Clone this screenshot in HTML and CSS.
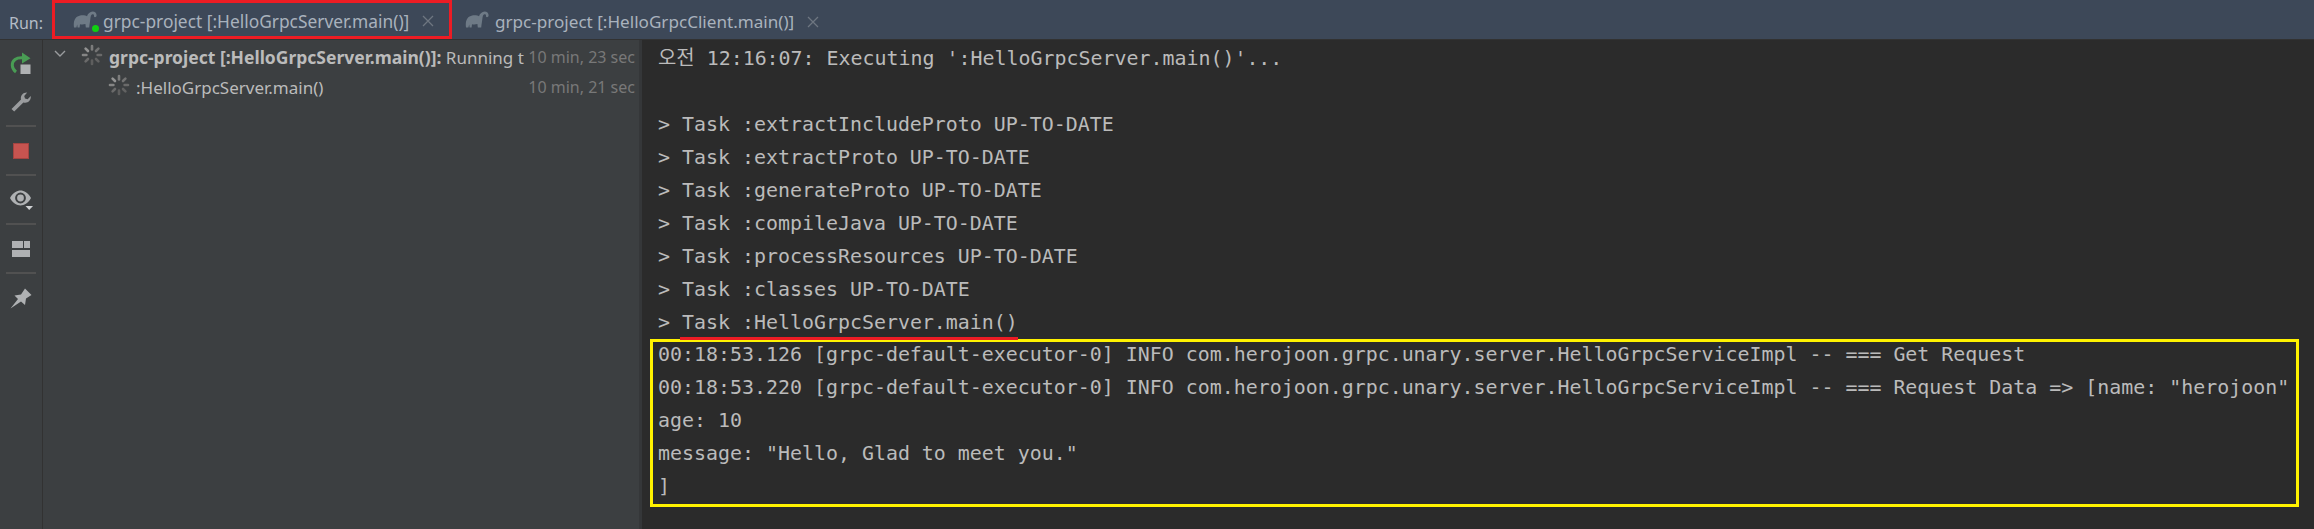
FILE: index.html
```html
<!DOCTYPE html>
<html lang="en">
<head>
<meta charset="utf-8">
<title>Run</title>
<link rel="stylesheet" href="styles.css">
</head>
<body>
<svg class="defs" width="0" height="0" aria-hidden="true">
  <defs>
    <symbol id="elephant" viewBox="0 0 24 17">
      <path d="M1 16.5 C0.4 12 1 7.5 4.5 5.5 C8 3.6 12 4 14 5.2 C15 2.8 17 0.6 19.6 0.6 C22 0.6 23.6 2.2 23.6 4.2 C23.6 5.4 22.9 6.2 22 6.2 C21.2 6.2 20.8 5.6 21 4.8 C21.2 3.6 20.3 3 19.4 3.2 C18 3.6 17.6 5.6 17.4 7.6 C17.2 10 16.6 12.6 16.2 16.5 L12.8 16.5 L12.4 13 C10.5 13.6 8.6 13.6 7 13.2 L6.6 16.5 L4.6 16.5 L4.2 13.4 L3.4 16.5 Z"/>
    </symbol>
    <symbol id="spinner" viewBox="0 0 22 22">
      <g stroke-width="2.6" stroke-linecap="round" fill="none">
        <path d="M11 2v3.4" stroke="#7c7c7c"/>
        <path d="M17.4 4.6l-2.4 2.4" stroke="#737373"/>
        <path d="M20 11h-3.4" stroke="#6a6a6a"/>
        <path d="M17.4 17.4l-2.4-2.4" stroke="#626262"/>
        <path d="M11 20v-3.4" stroke="#5e5e5e"/>
        <path d="M4.6 17.4l2.4-2.4" stroke="#6a6a6a"/>
        <path d="M2 11h3.4" stroke="#858585"/>
        <path d="M4.6 4.6l2.4 2.4" stroke="#939393"/>
      </g>
    </symbol>
    <symbol id="close" viewBox="0 0 12 12">
      <path d="M1 1l10 10M11 1L1 11" stroke="#6e7681" stroke-width="1.3" fill="none"/>
    </symbol>
  </defs>
</svg>

<div class="window">
  <header class="tabbar">
    <span class="run-label">Run:</span>
    <div class="tab tab-active">
      <span class="tab-icon">
        <svg class="elephant"><use href="#elephant"/></svg>
        <span class="live-dot"></span>
      </span>
      <span class="tab-title">grpc-project [:HelloGrpcServer.main()]</span>
      <svg class="tab-close"><use href="#close"/></svg>
    </div>
    <div class="tab tab-second">
      <span class="tab-icon">
        <svg class="elephant"><use href="#elephant"/></svg>
      </span>
      <span class="tab-title">grpc-project [:HelloGrpcClient.main()]</span>
      <svg class="tab-close"><use href="#close"/></svg>
    </div>
  </header>

  <div class="main">
    <aside class="toolbar">
      <div class="tool">
        <svg width="24" height="24" viewBox="0 0 24 24">
          <path d="M7 21 C2.5 17.5 2 11.5 6 8.5 C8 7 10.5 6.6 13.5 6.8" stroke="#499c54" stroke-width="3" fill="none"/>
          <path d="M13 1.5 L21.5 7.2 L13 12.5 Z" fill="#499c54"/>
          <rect x="11.5" y="13.5" width="10" height="9.5" fill="#afb1b3"/>
        </svg>
      </div>
      <div class="tool">
        <svg width="22" height="22" viewBox="0 0 22 22">
          <path d="M1.5 18 L11 8.6 C10.2 5 12.6 1.4 17.2 1.5 L14.2 5 L15 7.6 L17.6 8.2 L20.8 5 C21.2 9.8 17.4 12.6 13.4 11.4 L4.2 20.6 Z" fill="#9a9c9e"/>
        </svg>
      </div>
      <hr class="tool-sep">
      <div class="tool">
        <span class="stop-icon"></span>
      </div>
      <hr class="tool-sep">
      <div class="tool">
        <svg width="24" height="22" viewBox="0 0 24 22">
          <path d="M1 9 C4 3.5 8 1.6 11.5 1.6 C15 1.6 19 3.5 22 9 C19 14.5 15 16.4 11.5 16.4 C8 16.4 4 14.5 1 9 Z M11.5 3.6 A5.4 5.4 0 1 0 11.5 14.4 A5.4 5.4 0 1 0 11.5 3.6 Z" fill="#afb1b3" fill-rule="evenodd"/>
          <circle cx="11.5" cy="9" r="3.4" fill="#afb1b3"/>
          <path d="M16.5 17 L24 17 L20.2 21 Z" fill="#d0d2d4"/>
        </svg>
      </div>
      <hr class="tool-sep">
      <div class="tool">
        <svg width="18" height="16" viewBox="0 0 18 16">
          <path d="M0 0h11v7H0z M12 0h6v7h-6z M0 9h18v7H0z" fill="#afb1b3"/>
        </svg>
      </div>
      <hr class="tool-sep">
      <div class="tool">
        <svg width="22" height="22" viewBox="0 0 22 22">
          <path d="M0.5 21.5 L8 12 L4.5 8.5 L11 7.5 L15 1.5 L21.5 8 L16 11.5 L15 18 L11 14.5 Z" fill="#afb1b3"/>
        </svg>
      </div>
    </aside>

    <section class="tree">
      <div class="tree-row tree-root">
        <svg class="chevron" width="12" height="8" viewBox="0 0 12 8"><path d="M1 1l5 5 5-5" stroke="#9a9c9e" stroke-width="1.4" fill="none"/></svg>
        <svg class="spin"><use href="#spinner"/></svg>
        <span class="tree-label"><b>grpc-project [:HelloGrpcServer.main()]:</b> Running t</span>
        <span class="tree-time">10 min, 23 sec</span>
      </div>
      <div class="tree-row tree-child">
        <svg class="spin"><use href="#spinner"/></svg>
        <span class="tree-label">:HelloGrpcServer.main()</span>
        <span class="tree-time">10 min, 21 sec</span>
      </div>
    </section>

    <section class="console">
      <div class="line">오전 12:16:07: Executing ':HelloGrpcServer.main()'...</div>
      <div class="line"></div>
      <div class="line">&gt; Task :extractIncludeProto UP-TO-DATE</div>
      <div class="line">&gt; Task :extractProto UP-TO-DATE</div>
      <div class="line">&gt; Task :generateProto UP-TO-DATE</div>
      <div class="line">&gt; Task :compileJava UP-TO-DATE</div>
      <div class="line">&gt; Task :processResources UP-TO-DATE</div>
      <div class="line">&gt; Task :classes UP-TO-DATE</div>
      <div class="line">&gt; <span class="marked">Task :HelloGrpcServer.main()</span></div>
      <div class="highlight">
        <div class="line">00:18:53.126 [grpc-default-executor-0] INFO com.herojoon.grpc.unary.server.HelloGrpcServiceImpl -- === Get Request</div>
        <div class="line">00:18:53.220 [grpc-default-executor-0] INFO com.herojoon.grpc.unary.server.HelloGrpcServiceImpl -- === Request Data =&gt; [name: "herojoon"</div>
        <div class="line">age: 10</div>
        <div class="line">message: "Hello, Glad to meet you."</div>
        <div class="line">]</div>
      </div>
    </section>
  </div>
</div>
</body>
</html>
```
FILE: styles.css
```css
* { box-sizing: border-box; }
html, body { margin: 0; padding: 0; height: 100%; background: #3c3f41; overflow: hidden; }
.defs { position: absolute; }

.window { display: flex; flex-direction: column; height: 529px; width: 2314px; }

/* tab bar */
.tabbar {
  display: flex; align-items: stretch; flex: 0 0 39px;
  background: #3d4858; border-bottom: 1px solid #323232;
  font: 17.1px "Noto Sans", sans-serif; color: #a9b2bd;
}
.run-label { display: flex; align-items: center; width: 52px; padding: 6px 0 0 9px; font-size: 16px; color: #b4bcc6; }
.tab { display: flex; align-items: center; }
.tab-active { width: 400px; height: 39px; border: 3px solid #ed1c24; padding: 3px 0 0 18px; font-size: 17.35px; }
.tab-second { padding: 4px 0 0 13px; }
.tab-icon { position: relative; display: block; width: 24px; height: 17px; margin: -4px 6px 0 0; }
.elephant { display: block; width: 24px; height: 17px; fill: #6e7a86; }
.live-dot {
  position: absolute; right: -2px; bottom: -4px;
  width: 7px; height: 7px; border-radius: 50%; background: #10d010;
}
.tab-title { white-space: nowrap; }
.tab-close { width: 12px; height: 12px; margin-left: 13px; }

/* layout */
.main { display: flex; flex: 1; min-height: 0; }

/* left toolbar */
.toolbar {
  flex: 0 0 43px; display: flex; flex-direction: column; align-items: center;
  padding-top: 3px; background: #3c3f41; border-right: 1px solid #323232;
}
.tool { flex: 0 0 39px; width: 100%; display: flex; align-items: center; justify-content: center; }
.tool:nth-child(n+3) { flex-basis: 47px; }
.tool-sep { flex: 0 0 2px; width: 30px; margin: 0; border: 0; background: #515151; }
.tool:nth-child(2) { margin-bottom: 4px; }
.stop-icon { width: 16px; height: 16px; background: #c75450; border: 1px solid #a34441; }

/* tree */
.tree {
  flex: 0 0 599px; min-width: 0; padding: 2px 4px 0 0; background: #3c3f41;
  border-right: 3px solid #353739;
  font: 17px "Noto Sans", sans-serif; color: #bbbbbb;
}
.tree-row { display: flex; align-items: center; height: 30px; }
.tree-root { padding-left: 11px; }
.tree-child { padding-left: 65px; }
.chevron { flex: none; margin: -7px 15px 0 0; }
.spin { flex: none; width: 22px; height: 22px; margin: -5px 6px 0 0; }
.tree-label { flex: 1; min-width: 0; white-space: nowrap; }
.tree-label b { font-size: 17.5px; font-weight: 700; }
.tree-time { flex: none; width: 108px; margin-left: 5px; font-size: 16px; text-align: right; color: #787878; white-space: nowrap; }

/* console */
.console {
  flex: 1; min-width: 0; padding: 2px 0 0 16px; background: #2b2b2b;
  font: 19.93px "DejaVu Sans Mono", "Noto Sans CJK KR", monospace; color: #bbbbbb;
}
.line { height: 33px; line-height: 33px; white-space: pre; }
.marked { position: relative; }
.marked::after {
  content: ""; position: absolute; left: -2px; right: 0; bottom: -6px;
  height: 3px; background: #ed1c24;
}
.highlight {
  width: 1649px; height: 168px; margin: 0 0 0 -8px; padding: 0 0 0 5px;
  border: 3px solid #fff200;
}
.highlight .line:first-child { margin-top: -4px; }
```
